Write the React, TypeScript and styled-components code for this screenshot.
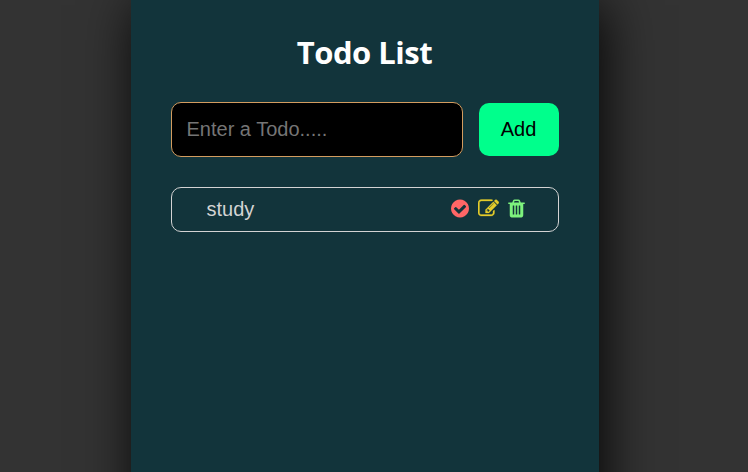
import React from "react";
import styled, { createGlobalStyle } from "styled-components";

const GlobalStyle = createGlobalStyle`
  * { box-sizing: border-box; }
  body {
    margin: 0;
    background: #333;
    overflow: hidden;
    font-family: "Liberation Sans", Arial, sans-serif;
  }
`;

const Page = styled.div`
  height: 100vh;
  overflow: hidden;
`;

const Panel = styled.main`
  width: 468px;
  height: 620px;
  margin-left: 131px;
  padding: 31px 40px 0;
  background: #12343b;
  box-shadow: 5px 5px 50px rgba(0, 0, 0, 0.9);
`;

const Title = styled.h1`
  margin: 0;
  padding-right: 1px;
  height: 43px;
  line-height: 43px;
  text-align: center;
  font-family: "Open Sans", "Noto Sans", sans-serif;
  font-size: 31px;
  font-weight: 700;
  letter-spacing: -0.5px;
  color: #fff;
`;

const Form = styled.form`
  display: flex;
  align-items: center;
  gap: 16px;
  margin-top: 28px;
`;

const Input = styled.input`
  width: 292px;
  height: 55px;
  padding: 0 14.5px;
  border: 1px solid #d39c5f;
  border-radius: 10px;
  outline: none;
  background: #000;
  color: #fff;
  font: 20px "Liberation Sans", Arial, sans-serif;
  &::placeholder { color: #757575; }
`;

const AddButton = styled.button`
  width: 80px;
  height: 53px;
  padding: 0 1px 0 0;
  border: 0;
  border-radius: 10px;
  background: #00ff8c;
  color: #000;
  font: 20px "Liberation Sans", Arial, sans-serif;
`;

const List = styled.ul`
  margin: 30px 0 0;
  padding: 0;
  list-style: none;
`;

const Item = styled.li`
  display: flex;
  align-items: center;
  justify-content: space-between;
  height: 45px;
  padding: 0 33px 0 34.5px;
  border: 1px solid #d3d3d3;
  border-radius: 10px;
  color: #d3d3d3;
  font-size: 20px;
`;

const Actions = styled.span`
  display: flex;
  align-items: center;
  gap: 9px;
  margin-top: -2px;
`;

const Icon = styled.svg<{ $color: string; $weight?: number }>`
  display: block;
  fill: ${(p) => p.$color};
  stroke: ${(p) => p.$color};
  stroke-width: ${(p) => p.$weight ?? 0};
`;

const CheckIcon = () => (
  <Icon $color="#ff6666" width="18" height="21" viewBox="128 0 1536 1792">
    <path d="M1412 734q0-28-18-46l-91-90q-19-19-45-19t-45 19l-408 407-226-226q-19-19-45-19t-45 19l-91 90q-18 18-18 46 0 27 18 45l362 362q19 19 45 19 27 0 46-19l543-543q18-18 18-45zm252 162q0 209-103 385.5t-279.5 279.5-385.5 103-385.5-103-279.5-279.5-103-385.5 103-385.5 279.5-279.5 385.5-103 385.5 103 279.5 279.5 103 385.5z" />
  </Icon>
);

const EditIcon = () => (
  <Icon $color="#e5cd2b" $weight={24} width="21" height="21" viewBox="0 0 1792 1792">
    <path d="M888 1184l116-116-152-152-116 116v56h96v96h56zm440-720q-16-16-33 1l-350 350q-17 17-1 33t33-1l350-350q17-17 1-33zm80 594v190q0 119-84.5 203.5t-203.5 84.5h-832q-119 0-203.5-84.5t-84.5-203.5v-832q0-119 84.5-203.5t203.5-84.5h832q63 0 117 25 15 7 18 23 3 17-9 29l-49 49q-14 14-32 8-23-6-45-6h-832q-66 0-113 47t-47 113v832q0 66 47 113t113 47h832q66 0 113-47t47-113v-126q0-13 9-22l64-64q15-15 35-7t20 29zm-96-738l288 288-672 672h-288v-288zm444 132l-92 92-288-288 92-92q28-28 68-28t68 28l152 152q28 28 28 68t-28 68z" />
  </Icon>
);

const TrashIcon = () => (
  <Icon $color="#7df27d" width="17" height="21" viewBox="170 0 1451 1792">
    <path d="M704 1376v-704q0-14-9-23t-23-9h-64q-14 0-23 9t-9 23v704q0 14 9 23t23 9h64q14 0 23-9t9-23zm256 0v-704q0-14-9-23t-23-9h-64q-14 0-23 9t-9 23v704q0 14 9 23t23 9h64q14 0 23-9t9-23zm256 0v-704q0-14-9-23t-23-9h-64q-14 0-23 9t-9 23v704q0 14 9 23t23 9h64q14 0 23-9t9-23zm-544-992h448l-48-117q-7-9-17-11h-317q-10 2-17 11zm928 0v96q0 14-9 23t-23 9h-96v948q0 83-47 143.5t-113 60.5h-832q-66 0-113-58.5t-47-141.5v-952h-96q-14 0-23-9t-9-23v-64q0-14 9-23t23-9h309l70-167q15-37 54-63t79-26h320q40 0 79 26t54 63l70 167h309q14 0 23 9t9 23z" />
  </Icon>
);

export default function App() {
  return (
    <Page>
      <GlobalStyle />
      <Panel>
        <Title>Todo List</Title>
        <Form onSubmit={(e) => e.preventDefault()}>
          <Input placeholder="Enter a Todo....." />
          <AddButton>Add</AddButton>
        </Form>
        <List>
          <Item>
            <span>study</span>
            <Actions>
              <CheckIcon />
              <EditIcon />
              <TrashIcon />
            </Actions>
          </Item>
        </List>
      </Panel>
    </Page>
  );
}
